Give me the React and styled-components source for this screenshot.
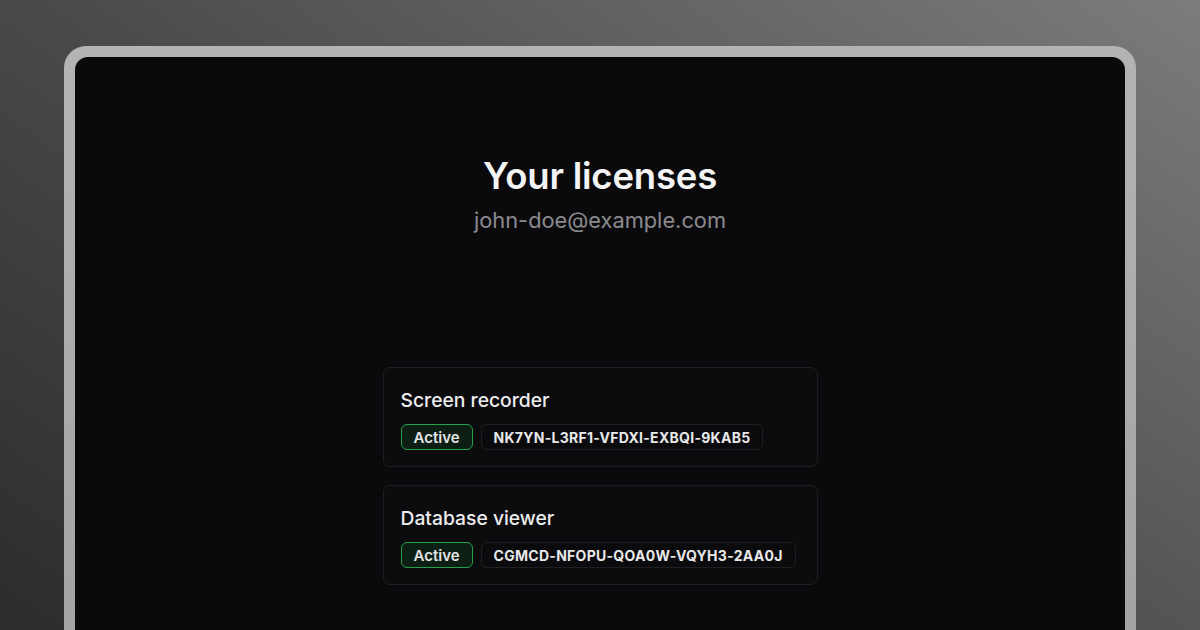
import React from "react";
import styled, { createGlobalStyle } from "styled-components";

const Global = createGlobalStyle`
  html, body { margin: 0; padding: 0; }
  body {
    width: 1200px;
    height: 630px;
    overflow: hidden;
    font-family: Inter, "Noto Sans", sans-serif;
    background: linear-gradient(35deg, #2c2c2c 0%, #4a4a4a 45%, #7c7c7c 100%);
  }
`;

const Stage = styled.div`
  width: 1200px;
  height: 630px;
  padding: 46px 64px 0;
  box-sizing: border-box;
  overflow: hidden;
`;

const Frame = styled.div`
  height: 640px;
  border-radius: 22px;
  background: linear-gradient(180deg, #b4b4b4 0%, #a2a2a2 100%);
  padding: 11px 11px 0;
  box-sizing: border-box;
`;

const Screen = styled.div`
  height: 100%;
  background: #0a0a0c;
  border-radius: 13px 13px 0 0;
  display: flex;
  flex-direction: column;
  align-items: center;
  padding-top: 98px;
  box-sizing: border-box;
`;

const Title = styled.h1`
  margin: 0;
  font-size: 36.5px;
  line-height: 42px;
  font-weight: 600;
  color: #f4f4f5;
  letter-spacing: -0.2px;
`;

const Email = styled.div`
  margin-top: 10px;
  font-size: 21.8px;
  line-height: 26px;
  color: #8b8b8f;
`;

const List = styled.div`
  margin-top: 134px;
  width: 435px;
  display: flex;
  flex-direction: column;
  gap: 18px;
`;

const Card = styled.div`
  border: 1px solid #1e1e22;
  border-radius: 7px;
  background: #0c0c0e;
  padding: 19px 17px 16px;
`;

const Name = styled.div`
  font-size: 19.3px;
  line-height: 26px;
  color: #ececee;
  font-weight: 500;
`;

const Row = styled.div`
  margin-top: 11px;
  display: flex;
  gap: 8px;
`;

const Badge = styled.span`
  height: 26px;
  box-sizing: border-box;
  padding: 0 12px;
  display: inline-flex;
  align-items: center;
  border: 1.5px solid #22a34b;
  border-radius: 6px;
  background: #0d1f14;
  color: #e4e4e7;
  font-size: 15px;
  font-weight: 600;
`;

const Key = styled.span`
  height: 26px;
  box-sizing: border-box;
  padding: 0 12px;
  display: inline-flex;
  align-items: center;
  border: 1px solid #1f1f23;
  border-radius: 6px;
  background: #0b0b0d;
  color: #e8e8ea;
  font-size: 14px;
  font-weight: 650;
  letter-spacing: 0.28px;
`;

const licenses = [
  { name: "Screen recorder", key: "NK7YN-L3RF1-VFDXI-EXBQI-9KAB5" },
  { name: "Database viewer", key: "CGMCD-NFOPU-QOA0W-VQYH3-2AA0J" },
];

export default function App() {
  return (
    <>
      <Global />
      <Stage>
        <Frame>
          <Screen>
            <Title>Your licenses</Title>
            <Email>john-doe@example.com</Email>
            <List>
              {licenses.map((l) => (
                <Card key={l.key}>
                  <Name>{l.name}</Name>
                  <Row>
                    <Badge>Active</Badge>
                    <Key>{l.key}</Key>
                  </Row>
                </Card>
              ))}
            </List>
          </Screen>
        </Frame>
      </Stage>
    </>
  );
}
